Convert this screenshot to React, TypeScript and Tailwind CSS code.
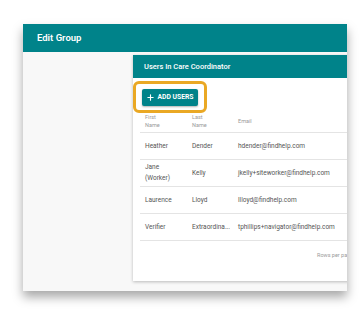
import { Plus } from "lucide-react";

const rows = [
  { first: ["Heather"], last: "Dender", email: "hdender@findhelp.com" },
  { first: ["Jane", "(Worker)"], last: "Kelly", email: "jkelly+siteworker@findhelp.com" },
  { first: ["Laurence"], last: "Lloyd", email: "llloyd@findhelp.com" },
  { first: ["Verifier"], last: "Extraordina...", email: "tphillips+navigator@findhelp.com" },
];

export default function App() {
  return (
    <div className="relative h-[323px] w-[361px] overflow-hidden bg-white pl-[23px] pt-[24px] font-['Roboto',sans-serif]">
      <div className="flex h-[267px] w-[324px] flex-col overflow-hidden shadow-[0_6px_10px_rgba(0,0,0,0.35)]">
        {/* Window header */}
        <div className="flex h-[28px] shrink-0 items-center bg-[#00838a] pl-[14px]">
          <span className="text-[9.5px] font-semibold text-white">Edit Group</span>
        </div>

        {/* Body */}
        <div className="flex-1 bg-[#f8f8f8] pl-[110px] pt-[3px]">
          <div className="flex h-[226px] w-[240px] flex-col bg-white shadow-[0_1px_3px_rgba(0,0,0,0.25)]">
            <div className="flex h-[23px] shrink-0 items-center bg-[#00838a] pl-[11px]">
              <span className="text-[7.5px] font-medium text-white">Users In Care Coordinator</span>
            </div>

            {/* Highlighted button */}
            <div className="mt-[3px] flex h-[32px] w-[74px] items-center justify-center rounded-[6px] border-[3px] border-[#eaa824]">
              <button
                type="button"
                className="flex h-[17px] w-[56px] items-center justify-center gap-[2px] rounded-[2px] bg-[#00838a] text-[6.8px] font-bold text-white shadow-[0_1px_2px_rgba(0,0,0,0.3)]"
              >
                <Plus className="h-[9px] w-[9px]" strokeWidth={3} />
                ADD USERS
              </button>
            </div>

            {/* Table */}
            <div className="ml-[7px] flex flex-col">
              <div className="flex h-[20px] items-start border-b border-[#e4e4e4] pl-[5px] text-[5.5px] leading-[8px] text-[#9a9a9a]">
                <div className="w-[47px]">
                  First
                  <br />
                  Name
                </div>
                <div className="w-[46px]">
                  Last
                  <br />
                  Name
                </div>
                <div className="pt-[4px]">Email</div>
              </div>
              {rows.map((r) => (
                <div
                  key={r.email}
                  className="flex h-[27px] items-center border-b border-[#e4e4e4] pl-[5px] text-[6.5px] leading-[11px] text-[#555]"
                >
                  <div className="w-[47px]">
                    {r.first.map((l) => (
                      <div key={l}>{l}</div>
                    ))}
                  </div>
                  <div className="w-[46px] whitespace-nowrap">{r.last}</div>
                  <div className="whitespace-nowrap">{r.email}</div>
                </div>
              ))}
              <div className="flex h-[28px] items-center pl-[177px] text-[5.5px] whitespace-nowrap text-[#9a9a9a]">
                Rows per page:
              </div>
            </div>
          </div>
        </div>
      </div>
    </div>
  );
}
